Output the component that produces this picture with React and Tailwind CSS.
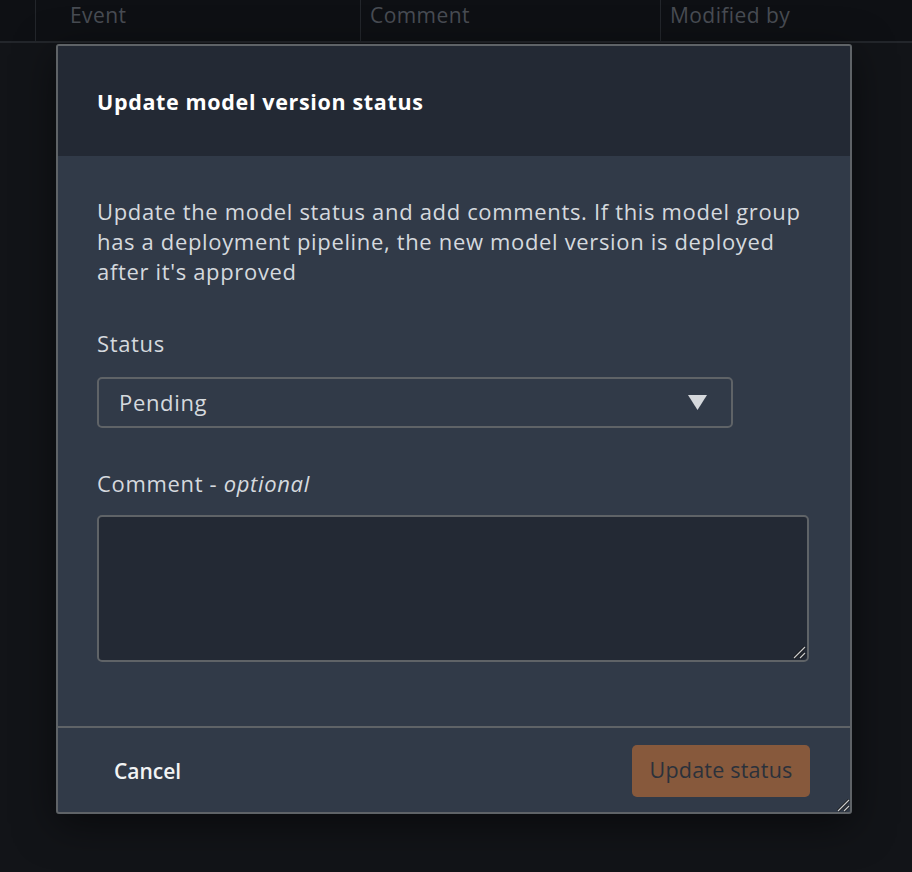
function Grip({ className }) {
  return (
    <svg className={className} width="14" height="14" viewBox="0 0 14 14">
      <line x1="13" y1="2" x2="2" y2="13" stroke="#111" strokeWidth="2.6" />
      <line x1="13" y1="8" x2="8" y2="13" stroke="#111" strokeWidth="2.6" />
      <line x1="13" y1="2" x2="2" y2="13" stroke="#c9cbce" strokeWidth="1.3" />
      <line x1="13" y1="8" x2="8" y2="13" stroke="#c9cbce" strokeWidth="1.3" />
    </svg>
  );
}

export default function App() {
  const font = { fontFamily: '"Open Sans", "Noto Sans", sans-serif' };
  return (
    <div className="w-[912px] h-[872px] overflow-hidden bg-[#121418] relative" style={font}>
      <div className="h-[43px] flex border-b-2 border-[#23262b] bg-[#0e1014] text-[21px] tracking-[0.02em] text-[#484c53]">
        <div className="w-[36px] border-r border-[#23262b]" />
        <div className="w-[325px] border-r border-[#23262b] pl-[34px] leading-[30px]">Event</div>
        <div className="w-[300px] border-r border-[#23262b] pl-[9px] leading-[30px]">Comment</div>
        <div className="flex-1 pl-[9px] leading-[30px]">Modified by</div>
      </div>
      <div className="relative ml-[56px] mt-[1px] w-[796px] h-[770px] border-2 border-[#5f6367] rounded-[3px] overflow-hidden flex flex-col bg-[#313a48] shadow-[0_10px_40px_rgba(0,0,0,0.5)]">
        <div className="h-[110px] shrink-0 bg-[#232934] flex items-center pl-[39px] pt-[2px]">
          <h2 className="text-[21.5px] tracking-[0.03em] font-bold text-white">Update model version status</h2>
        </div>
        <div className="h-[572px] shrink-0 px-[39px] pt-[40px] border-b-2 border-[#5f6367]">
          <p className="text-[22px] tracking-[0.03em] leading-[30px] text-[#d5d9de] w-[712px]">
            Update the model status and add comments. If this model group has a deployment pipeline, the new model version is deployed after it's approved
          </p>
          <div className="mt-[42px] text-[22px] tracking-[0.03em] leading-[30px] text-[#d5d9de]">Status</div>
          <div className="mt-[19px] w-[636px] h-[51px] border-2 border-[#5f6367] rounded-[5px] flex items-center justify-between pl-[20px] pr-[24px]">
            <span className="text-[22px] tracking-[0.03em] text-[#d5d9de]">Pending</span>
            <svg width="19" height="15" viewBox="0 0 19 15">
              <polygon points="0,0 19,0 9.5,15" fill="#d5d8dc" />
            </svg>
          </div>
          <div className="mt-[40px] text-[22px] tracking-[0.03em] leading-[30px] text-[#d5d9de]">
            Comment - <span className="italic">optional</span>
          </div>
          <div className="relative mt-[17px] w-[712px] h-[147px]">
            <textarea className="block w-full h-full bg-[#232934] border-2 border-[#5f6367] rounded-[5px] outline-none text-[#d5d9de] resize-none" />
            <Grip className="absolute right-[3px] bottom-[3px]" />
          </div>
        </div>
        <div className="flex-1 flex items-center justify-between pl-[40px] pr-[40px] pt-[1px]">
          <button className="px-[16px] text-[21px] font-semibold text-[#f2f3f4] leading-[30px]">Cancel</button>
          <button className="w-[178px] h-[52px] rounded-[5px] bg-[#87593c] text-[21.5px] tracking-[0.01em] text-[#2b313b] font-medium">Update status</button>
        </div>
        <Grip className="absolute right-[0px] bottom-[0px]" />
      </div>
    </div>
  );
}
